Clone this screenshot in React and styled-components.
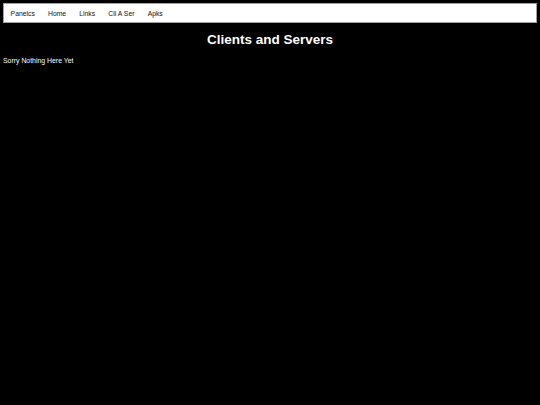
import styled, { createGlobalStyle } from "styled-components";

const GlobalStyle = createGlobalStyle`
  html, body {
    margin: 0;
    padding: 0;
    background: #000;
    min-height: 100%;
  }
  body {
    font-family: "Liberation Sans", Arial, sans-serif;
    color: #fff;
  }
`;

const Page = styled.div`
  background: #000;
  min-height: 405px;
  padding: 3px 3px 0;
  box-sizing: border-box;
`;

const Nav = styled.nav`
  display: flex;
  align-items: center;
  height: 20px;
  box-sizing: border-box;
  background: #fff;
  border: 1px solid #a0a0a0;
`;

const NavLink = styled.a`
  padding: 0 6.6px;
  font-size: 6.8px;
  color: #111;
  text-decoration: none;
  cursor: pointer;
`;

const Title = styled.h1`
  margin: 9px 0 0;
  text-align: center;
  font-size: 13.5px;
  line-height: 16px;
  font-weight: bold;
  color: #fff;
`;

const Message = styled.p`
  margin: 9px 0 0;
  font-size: 6.9px;
  line-height: 8px;
  color: #fff;
`;

const links = ["Panelcs", "Home", "Links", "Cli A Ser", "Apks"];

const App = () => {
  return (
    <>
      <GlobalStyle />
      <Page>
        <Nav>
          {links.map((l) => (
            <NavLink key={l}>{l}</NavLink>
          ))}
        </Nav>
        <Title>Clients and Servers</Title>
        <Message>Sorry Nothing Here Yet</Message>
      </Page>
    </>
  );
};

export default App;
